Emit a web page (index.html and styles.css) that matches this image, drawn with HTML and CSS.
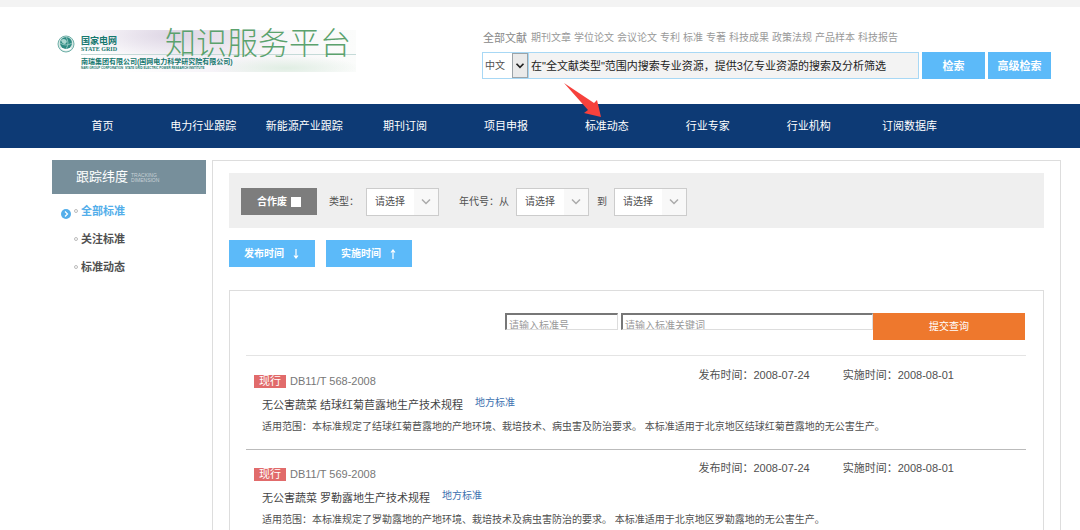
FILE: index.html
```html
<!DOCTYPE html>
<html lang="zh-CN">
<head>
<meta charset="utf-8">
<title>知识服务平台</title>
<meta name="viewport" content="width=device-width, initial-scale=1">
<link rel="stylesheet" href="styles.css">
</head>
<body>
<header class="header">
  <div class="brand">
    <svg class="brand-globe" viewBox="0 0 18 18" aria-hidden="true">
      <circle cx="9" cy="9" r="8" fill="#d5e8e5" stroke="#6fb0a8" stroke-width="1"/>
      <circle cx="9" cy="8" r="6" fill="#2d8a82"/>
      <path d="M4 5Q7 3 9 5T8 9Q5 9 4 5" fill="#a9d6cf"/>
      <path d="M3 8Q9 12 15 8M9 2Q13 8 9 14" fill="none" stroke="#8cc4bd" stroke-width="1"/>
      <path d="M4 13Q9 17 14 13" fill="none" stroke="#fff" stroke-width="1.4"/>
    </svg>
    <div class="brand-body">
      <div class="brand-top">
        <div class="brand-name"><strong>国家电网</strong><span>S<small>TATE</small> G<small>RID</small></span></div>
        <h1 class="brand-title">知识服务平台</h1>
      </div>
      <p class="brand-company">南瑞集团有限公司(国网电力科学研究院有限公司)</p>
      <p class="brand-english">NARI GROUP CORPORATION&nbsp; STATE GRID ELECTRIC POWER RESEARCH INSTITUTE</p>
    </div>
  </div>
  <form class="search">
    <nav class="types" aria-label="文献类型">
      <a class="types-all" href="#">全部文献</a>
      <a href="#">期刊文章</a><a href="#">学位论文</a><a href="#">会议论文</a><a href="#">专利</a><a href="#">标准</a><a href="#">专著</a><a href="#">科技成果</a><a href="#">政策法规</a><a href="#">产品样本</a><a href="#">科技报告</a>
    </nav>
    <div class="search-row">
      <div class="lang">
        <select aria-label="语言"><option>中文</option></select>
        <svg viewBox="0 0 16 26" aria-hidden="true"><path d="M4 11l4 4 4-4" fill="none" stroke="#222" stroke-width="2"/></svg>
      </div>
      <input class="search-input" type="text" aria-label="搜索" value='在"全文献类型"范围内搜索专业资源，提供3亿专业资源的搜索及分析筛选'>
      <button class="btn search-btn" type="button">检索</button>
      <button class="btn search-btn" type="button">高级检索</button>
    </div>
  </form>
</header>

<nav class="mainnav" aria-label="主导航">
  <ul>
    <li><a href="#">首页</a></li>
    <li><a href="#">电力行业跟踪</a></li>
    <li><a href="#">新能源产业跟踪</a></li>
    <li><a href="#">期刊订阅</a></li>
    <li><a href="#">项目申报</a></li>
    <li class="is-marked"><a href="#">标准动态</a>
      <svg class="pointer" viewBox="0 0 42 38" aria-hidden="true"><path d="M2 1L32 21L35 18L39 35L22 31L26 28Z" fill="#f6413c"/></svg>
    </li>
    <li><a href="#">行业专家</a></li>
    <li><a href="#">行业机构</a></li>
    <li><a href="#">订阅数据库</a></li>
  </ul>
</nav>

<div class="layout">
  <aside class="side">
    <h2 class="side-title">跟踪纬度<small>TRACKING<br>DIMENSION</small></h2>
    <ul class="side-list">
      <li class="is-active"><svg viewBox="0 0 10 10" aria-hidden="true"><circle cx="5" cy="5" r="5" fill="#53aeea"/><path d="M4 2.500l2.500 2.500L4 7.500" fill="none" stroke="#fff" stroke-width="1.200"/></svg><i></i><a href="#">全部标准</a></li>
      <li><i></i><a href="#">关注标准</a></li>
      <li><i></i><a href="#">标准动态</a></li>
    </ul>
  </aside>

  <main class="main">
    <form class="filters">
      <label class="void">合作废<input type="checkbox"></label>
      <label for="kind">类型：</label>
      <div class="pick"><select id="kind"><option>请选择</option></select><svg viewBox="0 0 24 26" aria-hidden="true"><path d="M8 10.500l4 4 4-4" fill="none" stroke="#aaa" stroke-width="1.500"/></svg></div>
      <label class="year" for="from">年代号：从</label>
      <div class="pick"><select id="from"><option>请选择</option></select><svg viewBox="0 0 24 26" aria-hidden="true"><path d="M8 10.500l4 4 4-4" fill="none" stroke="#aaa" stroke-width="1.500"/></svg></div>
      <label for="to">到</label>
      <div class="pick"><select id="to"><option>请选择</option></select><svg viewBox="0 0 24 26" aria-hidden="true"><path d="M8 10.500l4 4 4-4" fill="none" stroke="#aaa" stroke-width="1.500"/></svg></div>
    </form>

    <div class="sorts">
      <button class="btn sort" type="button">发布时间 <svg viewBox="0 0 8 10" aria-hidden="true"><path d="M4 0v9M2 6.500L4 9l2-2.500" fill="none" stroke="#fff" stroke-width="1.200"/></svg></button>
      <button class="btn sort" type="button">实施时间 <svg viewBox="0 0 8 10" aria-hidden="true"><path d="M4 10V1M2 3.500L4 1l2 2.500" fill="none" stroke="#fff" stroke-width="1.200"/></svg></button>
    </div>

    <section class="results">
      <form class="query">
        <input class="query-no" type="text" placeholder="请输入标准号" aria-label="标准号">
        <input class="query-key" type="text" placeholder="请输入标准关键词" aria-label="标准关键词">
        <button class="query-btn" type="button">提交查询</button>
      </form>
      <article class="item">
        <div class="item-head">
          <span class="tag">现行</span><span class="code">DB11/T 568-2008</span>
          <div class="dates"><span>发布时间：2008-07-24</span><span>实施时间：2008-08-01</span></div>
        </div>
        <div class="item-title"><h3>无公害蔬菜 结球红菊苣露地生产技术规程</h3><a href="#">地方标准</a></div>
        <p>适用范围：本标准规定了结球红菊苣露地的产地环境、栽培技术、病虫害及防治要求。 本标准适用于北京地区结球红菊苣露地的无公害生产。</p>
      </article>
      <article class="item">
        <div class="item-head">
          <span class="tag">现行</span><span class="code">DB11/T 569-2008</span>
          <div class="dates"><span>发布时间：2008-07-24</span><span>实施时间：2008-08-01</span></div>
        </div>
        <div class="item-title"><h3>无公害蔬菜 罗勒露地生产技术规程</h3><a href="#">地方标准</a></div>
        <p>适用范围：本标准规定了罗勒露地的产地环境、栽培技术及病虫害防治的要求。 本标准适用于北京地区罗勒露地的无公害生产。</p>
      </article>
    </section>
  </main>
</div>
</body>
</html>
```

FILE: styles.css
```css
* { box-sizing: border-box; }

body {
  display: flex;
  flex-direction: column;
  min-height: 100vh;
  margin: 0;
  border-top: 7px solid #f3f3f3;
  background: #fff;
  color: #505050;
  font: 11px/16px "Liberation Sans", "Noto Sans CJK SC", sans-serif;
}

h1, h2, h3, p, ul { margin: 0; padding: 0; font-weight: normal; }
ul { list-style: none; }
a { color: inherit; text-decoration: none; }
button, input, select { margin: 0; border-radius: 0; font: inherit; color: inherit; }
svg { display: block; flex: none; }

/* Header */
.header {
  display: flex;
  justify-content: space-between;
  align-items: flex-start;
  height: 97px;
  padding: 23px 29px 0 57px;
}
.brand { display: flex; gap: 6px; color: #16786f; }
.brand-globe { width: 18px; height: 18px; margin-top: 5px; }
.brand-body {
  width: 275px;
  height: 42px;
  background:
    radial-gradient(ellipse 75px 12px at 205px 38px, #e0eee3, transparent),
    radial-gradient(ellipse 110px 28px at 95px 5px, #ddd5e4, transparent),
    linear-gradient(90deg, #fff 15%, #f6f3f8 50%, #fbfcfb);
}
.brand-top { display: flex; height: 25px; border-bottom: 1px solid #c5dad8; }
.brand-name { display: flex; flex-direction: column; width: 84px; padding-top: 6px; }
.brand-name strong { font-size: 9px; line-height: 10px; }
.brand-name span { font: bold 6px/7px "Liberation Serif", serif; white-space: nowrap; }
.brand-name small { font-size: 6px; }
.brand-title { color: #5ba26d; font-size: 31px; font-weight: 300; line-height: 27px; white-space: nowrap; }
.brand-company { margin-top: 3px; font-size: 7px; font-weight: bold; line-height: 8px; white-space: nowrap; }
.brand-english { font-size: 3px; font-weight: bold; line-height: 4px; white-space: nowrap; }

.search { width: 569px; }
.types {
  display: flex;
  gap: 3px;
  height: 22px;
  color: #999;
  font-size: 10px;
  line-height: 15px;
}
.types-all { padding: 1px 1px 0 1px; color: #888; font-size: 11px; }
.search-row { display: flex; height: 27px; }
.lang { display: grid; grid-template-columns: 1fr 16px; width: 46px; border: 1px solid #a8d8f5; border-right: 0; }
.lang select {
  grid-area: 1 / 1 / 2 / 3;
  min-width: 0;
  padding: 0 0 0 2px;
  border: 0;
  background: #fff;
  font-size: 10px;
  appearance: none;
}
.lang svg {
  grid-area: 1 / 2;
  width: 16px;
  height: 25px;
  border: 1px solid #9ba3a8;
  background: #eaeaea;
  pointer-events: none;
}
.search-input {
  flex: 1;
  min-width: 0;
  padding: 0 2px;
  border: 1px solid #a8d8f5;
  background: #f3f3f3;
  color: #222;
}
.btn { padding: 0; border: 0; background: #5cbaf9; color: #fff; font-weight: bold; }
.search-btn { width: 63px; margin-left: 3px; }

/* Main navigation */
.mainnav { padding: 0 120px 0 52px; background: #0d3a75; color: #fff; }
.mainnav ul { display: grid; grid-template-columns: repeat(9, 1fr); }
.mainnav li { position: relative; text-align: center; white-space: nowrap; }
.mainnav a { display: block; line-height: 44px; }
.pointer { position: absolute; top: -22px; left: 6px; width: 42px; height: 38px; }

/* Columns */
.layout {
  display: grid;
  grid-template-columns: 154px 1fr;
  flex: 1;
  gap: 6px;
  padding: 12px 19px 0 52px;
}
.side-title {
  display: flex;
  align-items: center;
  gap: 3px;
  height: 34px;
  padding-left: 24px;
  background: #778f9b;
  color: #fff;
  font-size: 13px;
}
.side-title small { padding-top: 2px; color: #c8d2d7; font-size: 5px; line-height: 5px; }
.side-list { padding-top: 3px; }
.side-list li {
  display: flex;
  align-items: center;
  height: 28px;
  padding-left: 22px;
  font-weight: bold;
}
.side-list svg { width: 10px; height: 10px; margin: 6px 3px 0 -13px; }
.side-list i { width: 4px; height: 4px; margin-right: 3px; border: 1px solid #bbb; border-radius: 50%; }
.side-list .is-active { color: #53aeea; }

.main { padding: 12px 16px 0; border: 1px solid #ddd; border-bottom: 0; }
.filters {
  display: flex;
  align-items: center;
  height: 55px;
  padding: 2px 12px 0;
  background: #efefef;
  font-size: 10px;
}
.void {
  display: flex;
  align-items: center;
  justify-content: center;
  gap: 4px;
  width: 76px;
  height: 27px;
  margin-right: 12px;
  background: #7d7d7d;
  color: #fff;
  font-weight: bold;
}
.void input { width: 10px; height: 10px; background: #fff; appearance: none; }
.pick {
  display: grid;
  grid-template-columns: 1fr 24px;
  width: 73px;
  height: 28px;
  border: 1px solid #ccc;
  background: #fff;
}
.pick select {
  grid-area: 1 / 1 / 2 / 3;
  min-width: 0;
  padding: 0 8px;
  border: 0;
  background: transparent;
  appearance: none;
}
.pick svg { grid-area: 1 / 2; width: 24px; height: 26px; background: #f8f8f8; pointer-events: none; }
.pick + label { margin-left: 8px; }
.pick + .year { margin-left: 20px; }
.filters label + .pick { margin-left: 7px; }

.sorts { display: flex; gap: 11px; padding: 12px 0 23px; }
.sort {
  display: flex;
  align-items: center;
  justify-content: center;
  gap: 8px;
  width: 86px;
  height: 27px;
  font-size: 10px;
}
.sort svg { width: 8px; height: 10px; }

.results { padding: 22px 17px 0 16px; border: 1px solid #ddd; border-bottom: 0; }
.query { display: flex; justify-content: flex-end; align-items: flex-start; height: 43px; padding-right: 1px; border-bottom: 1px solid #e4e4e4; }
.query input {
  height: 17px;
  padding: 7px 2px 0;
  border: 1px solid #ddd;
  border-top: 2px solid #777;
  border-left: 2px solid #777;
  background: #fff;
  font-size: 10px;
  line-height: 12px;
}
.query input::placeholder { color: #999; }
.query-no { width: 113px; margin-right: 3px; }
.query-key { width: 252px; }
.query-btn { width: 152px; height: 27px; padding: 0; border: 0; background: #ee782d; color: #fff; font-size: 10px; }

.item { height: 93px; padding: 9px 8px 0; }
.item + .item { padding-top: 8px; border-top: 1px solid #bbb; }
.item-head { display: flex; height: 30px; }
.tag { width: 32px; height: 13px; margin-top: 10px; background: #e16b6b; color: #fff; line-height: 13px; text-align: center; }
.code { margin: 8px 0 0 4px; color: #777; }
.dates { display: flex; gap: 33px; margin-left: auto; padding-right: 64px; line-height: 21px; }
.item-title { display: flex; gap: 12px; padding-left: 8px; line-height: 20px; }
.item-title h3 { color: #444; font-size: 11px; }
.item-title a { color: #3d72b0; font-size: 10px; line-height: 16px; }
.item p { padding-left: 8px; font-size: 10px; line-height: 24px; white-space: nowrap; }
```
